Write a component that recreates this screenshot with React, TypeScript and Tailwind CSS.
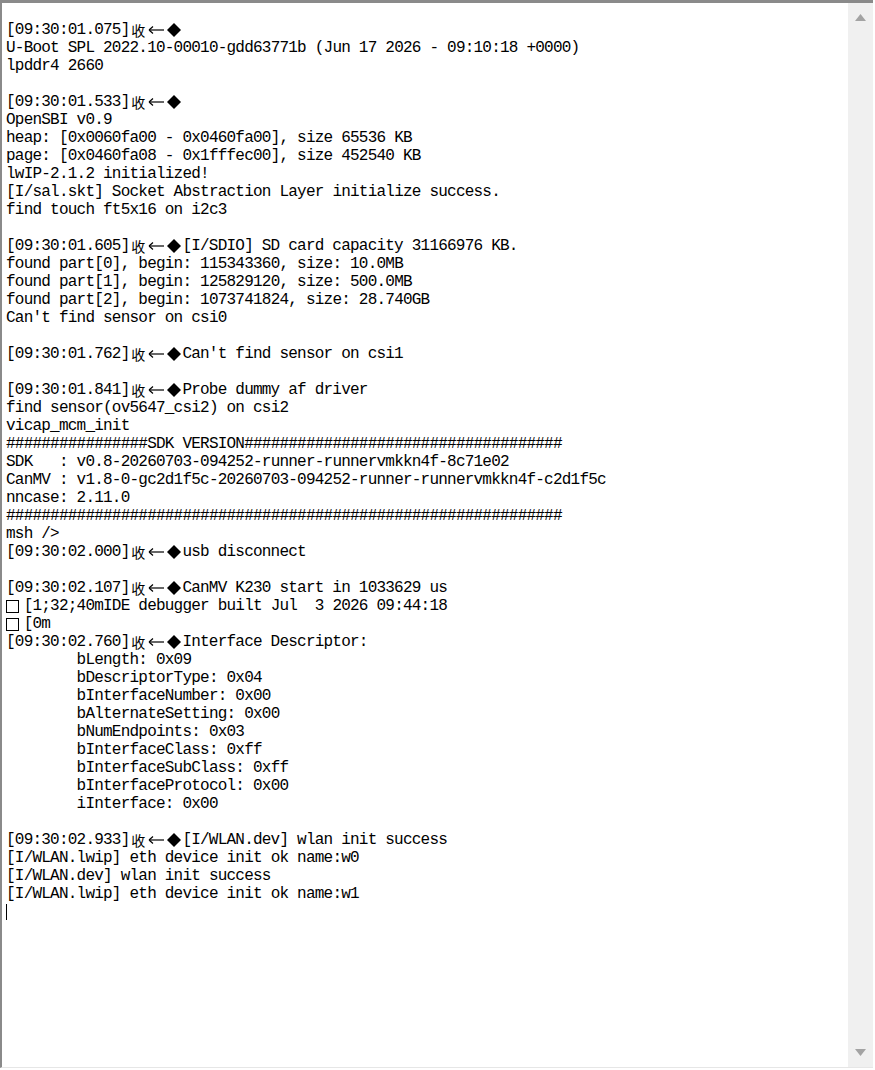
import React from "react";

const lines: string[] = [
  "[09:30:01.075]收←◆",
  "U-Boot SPL 2022.10-00010-gdd63771b (Jun 17 2026 - 09:10:18 +0000)",
  "lpddr4 2660",
  "",
  "[09:30:01.533]收←◆",
  "OpenSBI v0.9",
  "heap: [0x0060fa00 - 0x0460fa00], size 65536 KB",
  "page: [0x0460fa08 - 0x1fffec00], size 452540 KB",
  "lwIP-2.1.2 initialized!",
  "[I/sal.skt] Socket Abstraction Layer initialize success.",
  "find touch ft5x16 on i2c3",
  "",
  "[09:30:01.605]收←◆[I/SDIO] SD card capacity 31166976 KB.",
  "found part[0], begin: 115343360, size: 10.0MB",
  "found part[1], begin: 125829120, size: 500.0MB",
  "found part[2], begin: 1073741824, size: 28.740GB",
  "Can't find sensor on csi0",
  "",
  "[09:30:01.762]收←◆Can't find sensor on csi1",
  "",
  "[09:30:01.841]收←◆Probe dummy af driver",
  "find sensor(ov5647_csi2) on csi2",
  "vicap_mcm_init",
  "################SDK VERSION####################################",
  "SDK   : v0.8-20260703-094252-runner-runnervmkkn4f-8c71e02",
  "CanMV : v1.8-0-gc2d1f5c-20260703-094252-runner-runnervmkkn4f-c2d1f5c",
  "nncase: 2.11.0",
  "###############################################################",
  "msh />",
  "[09:30:02.000]收←◆usb disconnect",
  "",
  "[09:30:02.107]收←◆CanMV K230 start in 1033629 us",
  "□[1;32;40mIDE debugger built Jul  3 2026 09:44:18",
  "□[0m",
  "[09:30:02.760]收←◆Interface Descriptor:",
  "        bLength: 0x09",
  "        bDescriptorType: 0x04",
  "        bInterfaceNumber: 0x00",
  "        bAlternateSetting: 0x00",
  "        bNumEndpoints: 0x03",
  "        bInterfaceClass: 0xff",
  "        bInterfaceSubClass: 0xff",
  "        bInterfaceProtocol: 0x00",
  "        iInterface: 0x00",
  "",
  "[09:30:02.933]收←◆[I/WLAN.dev] wlan init success",
  "[I/WLAN.lwip] eth device init ok name:w0",
  "[I/WLAN.dev] wlan init success",
  "[I/WLAN.lwip] eth device init ok name:w1",
];

function Wide({ ch }: { ch: string }) {
  if (ch === "□") {
    return (
      <span className="inline-flex w-[17.64px] h-[18px] align-top items-center justify-start">
        <span className="block w-[13px] h-[13px] border border-black mt-[1px]" />
      </span>
    );
  }
  if (ch === "◆") {
    return (
      <span className="inline-flex w-[17.64px] h-[18px] align-top items-center justify-center">
        <svg width="14" height="14" viewBox="0 0 14 14">
          <polygon points="7,0 14,7 7,14 0,7" fill="#000" />
        </svg>
      </span>
    );
  }
  if (ch === "←") {
    return (
      <span className="inline-flex w-[17.64px] h-[18px] align-top items-center justify-center">
        <svg width="16" height="10" viewBox="0 0 16 10">
          <path d="M1 5 H16" stroke="#000" strokeWidth="1.2" />
          <path d="M1 5 L5 1.5 M1 5 L5 8.5" stroke="#000" strokeWidth="1.2" fill="none" />
        </svg>
      </span>
    );
  }
  return (
    <span
      className="inline-flex w-[17.64px] h-[18px] align-top items-center justify-center text-[14px] leading-[18px] tracking-normal"
      style={{ fontFamily: '"Noto Sans CJK SC", sans-serif' }}
    >
      {ch}
    </span>
  );
}

function Line({ text }: { text: string }) {
  const parts: React.ReactNode[] = [];
  let buf = "";
  let k = 0;
  for (const c of text) {
    if (c === "收" || c === "←" || c === "◆" || c === "□") {
      if (buf) parts.push(<span key={k++}>{buf}</span>);
      buf = "";
      parts.push(<Wide key={k++} ch={c} />);
    } else {
      buf += c;
    }
  }
  if (buf) parts.push(<span key={k++}>{buf}</span>);
  return <div className="h-[18px] whitespace-pre">{parts.length ? parts : "\u00a0"}</div>;
}

export default function App() {
  return (
    <div className="w-[875px] h-[1070px] bg-white overflow-hidden">
      <div className="flex w-[873px] h-[1068px] border-t-[3px] border-l-2 border-[#8a8a8a] border-b border-b-[#e6e6e6]">
        <div
          className="flex-1 pt-[18px] pl-[4px] text-black text-[16px] leading-[18px] tracking-[-0.78px]"
          style={{ fontFamily: '"Liberation Mono", monospace' }}
        >
          {lines.map((l, i) => (
            <Line key={i} text={l} />
          ))}
          <div className="h-[18px] flex items-center">
            <span className="block w-[1px] h-[16px] bg-black" />
          </div>
        </div>
        <div className="w-[25px] bg-[#f0f0f0] flex flex-col justify-between items-center pt-[11px] pb-[11px]">
          <svg width="11" height="7" viewBox="0 0 11 7">
            <polygon points="5.5,0 11,7 0,7" fill="#a3a3a3" />
          </svg>
          <svg width="11" height="7" viewBox="0 0 11 7">
            <polygon points="0,0 11,0 5.5,7" fill="#a3a3a3" />
          </svg>
        </div>
      </div>
    </div>
  );
}
